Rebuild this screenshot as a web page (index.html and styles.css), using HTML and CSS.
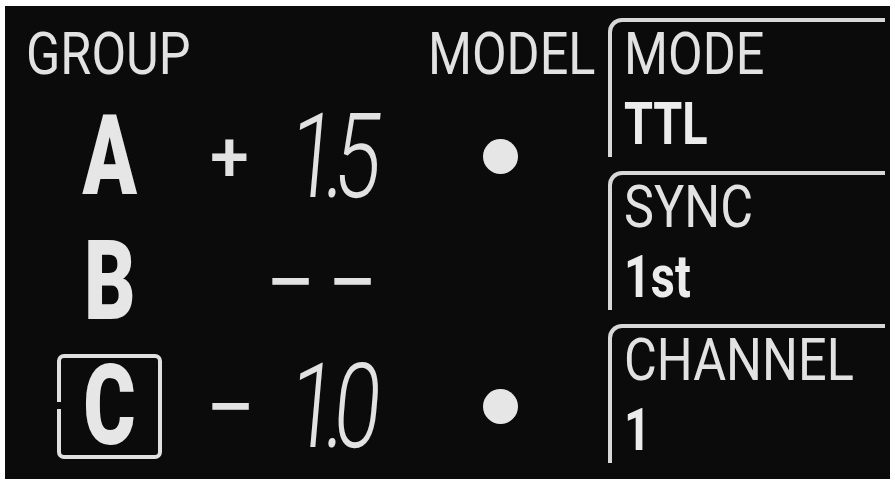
FILE: index.html
```html
<!DOCTYPE html>
<html lang="en">
<head>
  <meta charset="UTF-8" />
  <meta name="viewport" content="width=device-width, initial-scale=1.0" />
  <title>Flash Commander</title>
  <link rel="stylesheet" href="styles.css">
</head>
<body>

  <div class="panel">
    <div class="groups">
      <div class="head">
        <span class="lbl">GROUP</span>
        <span class="lbl lbl-right">MODEL</span>
      </div>

      <div class="row">
        <div class="grp"><span>A</span></div>
        <span class="sign">+</span>
        <span class="val">1.5</span>
        <span class="dot"></span>
      </div>

      <div class="row">
        <div class="grp"><span>B</span></div>
        <div class="dashes"><span>−</span><span>−</span></div>
      </div>

      <div class="row">
        <div class="grp grp-sel"><span>C</span></div>
        <span class="sign sign-minus">−</span>
        <span class="val">1.0</span>
        <span class="dot"></span>
      </div>
    </div>

    <div class="settings">
      <div class="box">
        <span class="lbl">MODE</span>
        <span class="setval">TTL</span>
      </div>
      <div class="box">
        <span class="lbl">SYNC</span>
        <span class="setval">1st</span>
      </div>
      <div class="box">
        <span class="lbl">CHANNEL</span>
        <span class="setval">1</span>
      </div>
    </div>
  </div>

</body>
</html>
```

FILE: styles.css
```css
* {
  box-sizing: border-box;
}

body {
  margin: 0;
  padding: 6px 5px 3px;
  background: #fff;
  font-family: Roboto, "Liberation Sans", sans-serif;
  color: #e2e2e2;
}

.panel {
  display: flex;
  height: 473px;
  background: #0b0b0b;
}

/* left side: groups */
.groups {
  flex: 0 0 603px;
  min-width: 0;
  padding: 18px 13px 0 21px;
}

.head {
  display: flex;
  justify-content: space-between;
  height: 70px;
}

.lbl {
  display: inline-block;
  font-size: 60px;
  font-weight: 400;
  line-height: 60px;
  transform: scaleX(0.84);
  transform-origin: left center;
  white-space: nowrap;
}

.lbl-right {
  transform-origin: right center;
}

.row {
  display: grid;
  grid-template-columns: 105px 48px 50px 36px 104px 1fr;
  align-items: center;
  height: 125px;
  margin-left: 31px;
}

.grp {
  display: flex;
  justify-content: center;
  align-items: center;
  width: 105px;
  height: 105px;
  font-size: 111px;
  font-weight: 900;
  line-height: 1;
  color: #e6e6e6;
}

.grp span {
  display: inline-block;
  transform: scaleX(0.72);
}

.grp-sel {
  position: relative;
  border: 4px solid #e0e0e0;
  border-radius: 7px;
}

.grp-sel::before {
  content: "";
  position: absolute;
  left: -5px;
  top: 44px;
  width: 6px;
  height: 7px;
  background: #0b0b0b;
}

.sign {
  grid-column: 3;
  justify-self: start;
  font-size: 70px;
  font-weight: 500;
  line-height: 1;
}

.sign-minus {
  display: inline-block;
  margin-left: -4px;
  transform: scaleX(1.25);
  transform-origin: left center;
}

.val {
  grid-column: 5;
  display: inline-block;
  margin-left: -6px;
  font-size: 118px;
  font-weight: 300;
  line-height: 1;
  letter-spacing: -16px;
  transform: skewX(-5deg) scaleX(0.72);
  transform-origin: left center;
  white-space: nowrap;
}

.dashes {
  grid-column: 4 / 6;
  display: flex;
  margin-left: 6px;
  font-size: 70px;
  font-weight: 500;
  line-height: 1;
}

.dashes span {
  display: inline-block;
  width: 62px;
  transform: scaleX(1.25);
  transform-origin: left center;
}

.dot {
  grid-column: 6;
  width: 35px;
  height: 35px;
  margin-left: 83px;
  border-radius: 50%;
  background: #e6e6e6;
}

/* right side: settings */
.settings {
  flex: 1;
  min-width: 0;
  display: flex;
  flex-direction: column;
  gap: 14px;
  padding: 12px 5px 0 0;
}

.box {
  display: flex;
  flex-direction: column;
  align-items: flex-start;
  height: 139px;
  min-width: 0;
  padding: 2px 0 0 12px;
  border-top: 4px solid #d8d8d8;
  border-left: 4px solid #d8d8d8;
  border-top-left-radius: 14px;
}

.setval {
  display: inline-block;
  margin-top: 10px;
  font-size: 60px;
  font-weight: 700;
  line-height: 60px;
  color: #ececec;
  transform: scaleX(0.78);
  transform-origin: left center;
}
```
